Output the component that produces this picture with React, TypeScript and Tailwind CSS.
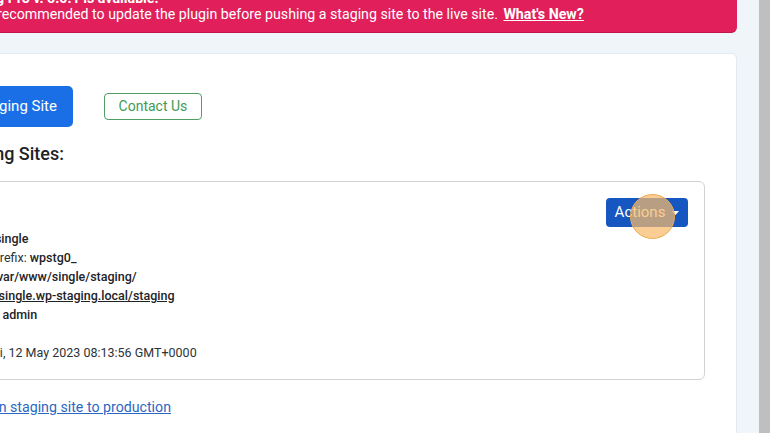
import React from "react";

export default function App() {
  const rows = [
    { label: "Database:", value: "single" },
    { label: "Database Prefix:", value: "wpstg0_" },
    { label: "Directory:", value: "/var/www/single/staging/" },
    { label: "URL:", value: "http://single.wp-staging.local/staging", link: true },
    { label: "Created By:", value: "admin" },
  ];

  return (
    <div className="w-[770px] h-[433px] overflow-hidden flex bg-[#f0f5fa] font-['Roboto',sans-serif]">
      <div className="flex-1 min-w-0 overflow-hidden">
        <div className="-ml-[140px] mr-[22px] flex flex-col">
          {/* Update notice */}
          <div className="-mt-[22px] bg-[#e01f5b] border-b border-[#c0164a] rounded-b-md pt-[12px] pb-[10px] pl-[70px] text-white text-[14.2px] leading-4 whitespace-nowrap">
            <div className="font-bold">WP Staging Pro v. 5.0.1 is available.</div>
            <div>
              It is highly recommended to update the plugin before pushing a staging site to the live site.{" "}
              <a className="font-bold underline ml-[2px]">What's New?</a>
            </div>
          </div>

          {/* Main panel */}
          <div className="mt-[20px] bg-white border border-[#e4eaf0] rounded-tr-md pt-[32px] pl-[19px] pr-[31px] pb-6">
            <div className="flex items-center gap-[31px]">
              <button className="h-[41px] px-4 rounded-[5px] bg-[#1b6fe6] text-white text-[15px] whitespace-nowrap">
                Create New Staging Site
              </button>
              <button className="h-[27px] w-[98px] rounded-[4px] border border-[#4f9e63] text-[#3f9b54] text-[14px] flex items-center justify-center">
                Contact Us
              </button>
            </div>

            <div className="mt-[15px] w-[184px] flex justify-end">
              <h2 className="text-[18px] leading-6 font-medium text-[#1d2327] whitespace-nowrap">
                Your Staging Sites:
              </h2>
            </div>

            <div className="mt-[15px] border border-[#d2d2d2] rounded-md flex justify-between">
              <div className="pl-[55px] pt-[47px] pb-[17px] text-[12.5px] leading-[19px] text-[#2c3338] whitespace-nowrap">
                {rows.map((r) => (
                  <div key={r.label}>
                    {r.label}{" "}
                    {r.link ? (
                      <a className="underline text-[#1d2327] font-medium">{r.value}</a>
                    ) : (
                      <span className="text-[#1d2327] font-medium">{r.value}</span>
                    )}
                  </div>
                ))}
                <div className="h-[19px]" />
                <div>Updated: Fri, 12 May 2023 08:13:56 GMT+0000</div>
              </div>

              <div className="pt-[16px] pr-[16px]">
                <div className="relative">
                  <button className="h-[29px] w-[82px] rounded-[4px] bg-[#1656c1] text-white text-[15px] flex items-center justify-center gap-[7px]">
                    Actions
                    <svg width="7" height="4" viewBox="0 0 7 4">
                      <path d="M0 0h7L3.5 4z" fill="currentColor" />
                    </svg>
                  </button>
                  <div className="absolute left-[24px] -top-[4px] w-[45px] h-[45px] rounded-full bg-[rgba(246,186,105,0.72)] border border-[#f0a94e]" />
                </div>
              </div>
            </div>

            <div className="mt-[17px] w-[291px] flex justify-end text-[14.2px] leading-5 whitespace-nowrap">
              <a className="underline text-[#2b68c2]">How to push changes in staging site to production</a>
            </div>
          </div>
        </div>
      </div>
      <div className="w-[11px] bg-[#bfbfbf]" />
    </div>
  );
}
